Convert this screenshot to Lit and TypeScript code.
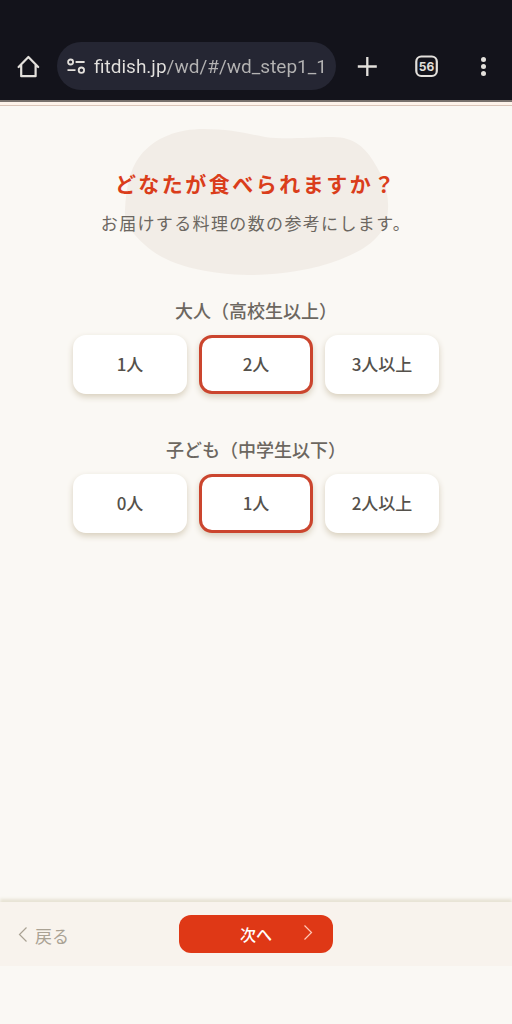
import { LitElement, html, css, svg } from "lit";
import { customElement, property, state } from "lit/decorators.js";

@customElement("browser-bar")
class BrowserBar extends LitElement {
  static styles = css`
    :host {
      display: block;
      background: #13131b;
      color: #e3e0dc;
      font-family: Roboto, sans-serif;
    }
    .bar {
      display: flex;
      align-items: center;
      padding: 42px 12px 10px;
    }
    .icon {
      display: block;
      flex: none;
      border: 0;
      padding: 0;
      background: none;
      color: inherit;
      width: 32px;
      height: 32px;
    }
    .icon svg,
    .site svg {
      display: block;
    }
    .count {
      font: 700 12px Inter, sans-serif;
    }
    .address {
      flex: 1;
      min-width: 0;
      display: flex;
      align-items: center;
      gap: 8px;
      height: 48px;
      margin: 0 14px 0 13px;
      padding: 0 8px 0 10px;
      box-sizing: border-box;
      border-radius: 24px;
      background: #252633;
    }
    .site {
      flex: none;
      border: 0;
      padding: 0;
      background: none;
      color: inherit;
    }
    .url {
      flex: 1;
      min-width: 0;
      border: 0;
      padding: 2px 0 0;
      outline: 0;
      font: 19px/28px Roboto, sans-serif;
      color: transparent;
      background: linear-gradient(90deg, #e3e1de 73px, #b4b3b3 73px);
      background-clip: text;
      -webkit-background-clip: text;
    }
    .actions {
      display: flex;
      gap: 27px;
    }
  `;

  render() {
    return html`
      <div class="bar">
        <button class="icon" aria-label="ホーム">
          <svg width="32" height="32" viewBox="0 0 32 32" fill="none" stroke="currentColor" stroke-width="2.2" stroke-linejoin="round" stroke-linecap="round">
            <path d="M6.6 17 16.4 7l9.8 10M9.2 14.8v11.4h14.4V14.8" />
          </svg>
        </button>
        <div class="address">
          <button class="site" aria-label="サイト情報">
            <svg width="19" height="18" viewBox="0 0 19 18" fill="none" stroke="currentColor" stroke-width="1.8">
              <circle cx="3.6" cy="5" r="2.5" />
              <path d="M8.6 5h9M0.5 13.2h8" />
              <circle cx="14.4" cy="13.2" r="2.7" />
            </svg>
          </button>
          <input class="url" type="text" aria-label="アドレス" .value=${"fitdish.jp/wd/#/wd_step1_1"} />
        </div>
        <div class="actions">
          <button class="icon" aria-label="新しいタブ">
            <svg width="32" height="32" viewBox="0 0 32 32" fill="none" stroke="currentColor" stroke-width="2.3">
              <path d="M17.3 7v19M7.8 16.5h19" />
            </svg>
          </button>
          <button class="icon" aria-label="タブ 56">
            <svg width="32" height="32" viewBox="0 0 32 32">
              <rect x="7.3" y="6.5" width="20.5" height="19.5" rx="5" fill="none" stroke="currentColor" stroke-width="2.2" />
              <text class="count" x="17.5" y="20.6" text-anchor="middle" fill="currentColor">56</text>
            </svg>
          </button>
          <button class="icon" aria-label="メニュー">
            <svg width="32" height="32" viewBox="0 0 32 32" fill="currentColor">
              ${[9.4, 16.4, 23.6].map((y) => svg`<circle cx="15.5" cy=${y} r="2.5" />`)}
            </svg>
          </button>
        </div>
      </div>
    `;
  }
}

@customElement("people-picker")
class PeoplePicker extends LitElement {
  @property() heading = "";
  @property() group = "";
  @property({ attribute: false }) options: string[] = [];
  @state() private choice = -1;
  @property({ type: Number }) selected = 0;

  static styles = css`
    :host {
      display: block;
    }
    .group {
      border: 0;
      margin: 0;
      padding: 0;
      min-width: 0;
    }
    .heading {
      width: 100%;
      padding: 0 0 12px;
      box-sizing: border-box;
      text-align: center;
      font-size: 18px;
      line-height: 26px;
      font-weight: 500;
      color: #6c6760;
    }
    .choices {
      display: grid;
      grid-template-columns: repeat(3, 1fr);
      gap: 12px;
    }
    .choice {
      display: grid;
      place-items: center;
      padding: 13px 0 14px;
      border: 3px solid #fff;
      border-radius: 13px;
      background: #fff;
      box-shadow: 0 3px 6px #d8cfbd;
      font-size: 17px;
      line-height: 26px;
      font-weight: 500;
      color: #55514b;
      cursor: pointer;
    }
    .choice:has(:checked) {
      border-color: #cb452e;
    }
    .radio {
      appearance: none;
      grid-area: 1 / 1;
      width: 100%;
      height: 100%;
      margin: 0;
      outline: 0;
    }
    .text {
      grid-area: 1 / 1;
    }
  `;

  render() {
    const current = this.choice < 0 ? this.selected : this.choice;
    return html`
      <fieldset class="group">
        <legend class="heading">${this.heading}</legend>
        <div class="choices">
          ${this.options.map(
            (option, i) => html`
              <label class="choice">
                <input
                  class="radio"
                  type="radio"
                  name=${this.group}
                  .checked=${i === current}
                  @change=${() => (this.choice = i)}
                />
                <span class="text">${option}</span>
              </label>
            `
          )}
        </div>
      </fieldset>
    `;
  }
}

@customElement("app-root")
class AppRoot extends LitElement {
  static styles = css`
    :host {
      display: flex;
      flex-direction: column;
      min-height: 100vh;
      box-sizing: border-box;
      padding-bottom: 58px;
      background: #faf8f4;
      font-family: "Noto Sans CJK JP", sans-serif;
    }
    .rule {
      height: 3px;
      border-top: 2px solid #77716c;
      border-bottom: 1px solid #d9c5b8;
      background: #fdf3ea;
    }
    .main {
      flex: 1;
      display: flex;
      flex-direction: column;
      align-items: center;
      padding: 22px 16px 32px;
    }
    .intro {
      display: grid;
      justify-items: center;
      width: 100%;
    }
    .blob {
      grid-area: 1 / 1;
      display: block;
    }
    .copy {
      grid-area: 1 / 1;
      text-align: center;
      padding-top: 37px;
    }
    .title {
      margin: 0;
      font-size: 21px;
      line-height: 36px;
      font-weight: 700;
      letter-spacing: 0.12em;
      color: #da3d1b;
    }
    .note {
      margin: 8px 0 0;
      font-size: 17px;
      line-height: 28px;
      letter-spacing: 0.08em;
      color: #6c6761;
    }
    .form {
      display: flex;
      flex-direction: column;
      gap: 42px;
      width: 100%;
      max-width: 366px;
      margin-top: 21px;
    }
    .footer {
      display: grid;
      grid-template-columns: 1fr minmax(0, 154px) 1fr;
      padding: 13px 18px;
      background: #f8f3ed;
      box-shadow: 0 -3px 3px #e7e3d4;
    }
    .back {
      display: flex;
      align-items: center;
      gap: 7px;
      color: #aaa294;
      font-size: 17px;
      line-height: 28px;
      padding-top: 4px;
      text-decoration: none;
    }
    .next {
      display: grid;
      grid-template-columns: 1fr auto 1fr;
      align-items: center;
      height: 38px;
      border: 0;
      border-radius: 12px;
      padding: 0 20px;
      background: #df3816;
      color: #fff;
      font: 500 16px/28px "Noto Sans CJK JP", sans-serif;
    }
    .label {
      grid-column: 2;
    }
    .chevron {
      display: block;
      justify-self: end;
    }
  `;

  render() {
    return html`
      <browser-bar></browser-bar>
      <div class="rule"></div>
      <main class="main">
        <header class="intro">
          <svg class="blob" width="266" height="148" viewBox="0 0 266 148" aria-hidden="true">
            <path
              fill="#f2ede7"
              d="M2 82C3 62 6 42 17 28C32 9 55 1 81 1C105 1 122 5 142 9C165 12 183 9 210 9C231 9 243 20 252 36C260 49 266 64 265 81C264 108 244 121 216 132C190 142 155 147 125 147C82 146 43 137 22 117C8 104 1 95 2 82Z"
            />
          </svg>
          <div class="copy">
            <h1 class="title">どなたが食べられますか？</h1>
            <p class="note">お届けする料理の数の参考にします。</p>
          </div>
        </header>
        <form class="form">
          <people-picker
            group="adults"
            heading="大人（高校生以上）"
            .options=${["1人", "2人", "3人以上"]}
            selected="1"
          ></people-picker>
          <people-picker
            group="children"
            heading="子ども（中学生以下）"
            .options=${["0人", "1人", "2人以上"]}
            selected="1"
          ></people-picker>
        </form>
      </main>
      <footer class="footer">
        <a class="back" href="#back">
          <svg class="chevron" width="10" height="18" viewBox="0 0 10 18" fill="none" stroke="currentColor" stroke-width="1.2">
            <path d="M8.5 .5 1.5 7.5l7 7" />
          </svg>
          <span>戻る</span>
        </a>
        <button class="next" type="button">
          <span class="label">次へ</span>
          <svg class="chevron" width="10" height="18" viewBox="0 0 10 18" fill="none" stroke="#ffc9b8" stroke-width="1.2">
            <path d="M1.5 .5 8.5 7.5l-7 7" />
          </svg>
        </button>
      </footer>
    `;
  }
}
